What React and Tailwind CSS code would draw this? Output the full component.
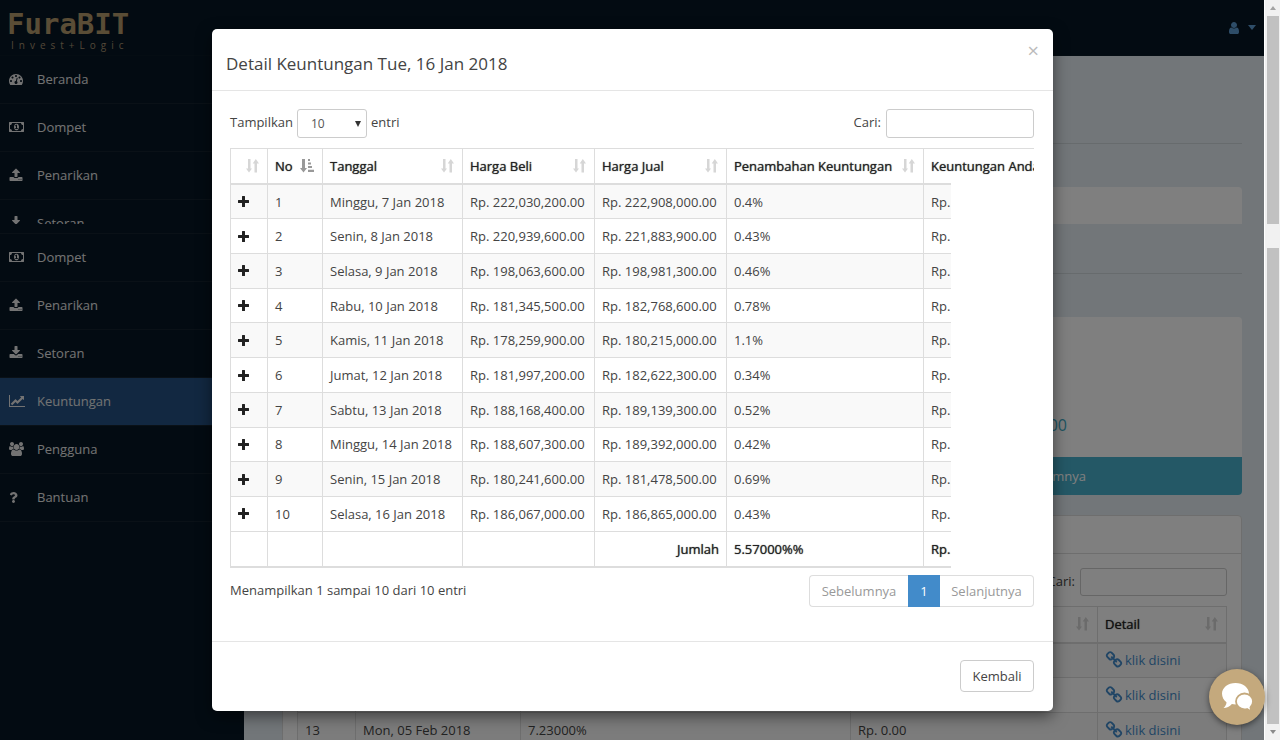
import { FaQuestion } from "react-icons/fa";

const PATHS = {
  dashboard: [1792, "M384 1152q0-53-37.5-90.5t-90.5-37.5-90.5 37.5-37.5 90.5 37.5 90.5 90.5 37.5 90.5-37.5 37.5-90.5zm192-448q0-53-37.5-90.5t-90.5-37.5-90.5 37.5-37.5 90.5 37.5 90.5 90.5 37.5 90.5-37.5 37.5-90.5zm428 481l101-382q6-26-7.5-48.5t-38.5-29.5-48 6.5-30 39.5l-101 382q-60 5-107 43.5t-63 98.5q-20 77 20 146t117 89 146-20 89-117q16-60-6-117t-72-91zm660-33q0-53-37.5-90.5t-90.5-37.5-90.5 37.5-37.5 90.5 37.5 90.5 90.5 37.5 90.5-37.5 37.5-90.5zm-640-640q0-53-37.5-90.5t-90.5-37.5-90.5 37.5-37.5 90.5 37.5 90.5 90.5 37.5 90.5-37.5 37.5-90.5zm448 192q0-53-37.5-90.5t-90.5-37.5-90.5 37.5-37.5 90.5 37.5 90.5 90.5 37.5 90.5-37.5 37.5-90.5zm320 448q0 261-141 483-19 29-54 29h-1402q-35 0-54-29-141-221-141-483 0-182 71-348t191-286 286-191 348-71 348 71 286 191 191 286 71 348z"],
  money: [1920, "M768 1152h384v-96h-128v-448h-114l-148 137 77 80q42-37 55-57h2v288h-128v96zm512-256q0 70-21 142t-59.5 134-101.5 101-138 39-138-39-101.5-101-59.5-134-21-142 21-142 59.5-134 101.5-101 138-39 138 39 101.5 101 59.5 134 21 142zm512 256v-512q-106 0-181-75t-75-181h-1152q0 106-75 181t-181 75v512q106 0 181 75t75 181h1152q0-106 75-181t181-75zm128-832v1152q0 26-19 45t-45 19h-1792q-26 0-45-19t-19-45v-1152q0-26 19-45t45-19h1792q26 0 45 19t19 45z"],
  upload: [1792, "M1344 1472q0-26-19-45t-45-19-45 19-19 45 19 45 45 19 45-19 19-45zm256 0q0-26-19-45t-45-19-45 19-19 45 19 45 45 19 45-19 19-45zm128-224v320q0 40-28 68t-68 28h-1472q-40 0-68-28t-28-68v-320q0-40 28-68t68-28h427q21 56 70.5 92t110.5 36h256q61 0 110.5-36t70.5-92h427q40 0 68 28t28 68zm-325-648q-17 40-59 40h-256v448q0 26-19 45t-45 19h-256q-26 0-45-19t-19-45v-448h-256q-42 0-59-40-17-39 14-69l448-448q18-19 45-19t45 19l448 448q31 30 14 69z"],
  download: [1792, "M1344 1344q0-26-19-45t-45-19-45 19-19 45 19 45 45 19 45-19 19-45zm256 0q0-26-19-45t-45-19-45 19-19 45 19 45 45 19 45-19 19-45zm128-224v320q0 40-28 68t-68 28h-1472q-40 0-68-28t-28-68v-320q0-40 28-68t68-28h465l135 136q58 56 136 56t136-56l136-136h464q40 0 68 28t28 68zm-325-569q17 41-14 70l-448 448q-18 19-45 19t-45-19l-448-448q-31-29-14-70 17-39 59-39h256v-448q0-26 19-45t45-19h256q26 0 45 19t19 45v448h256q42 0 59 39z"],
  chart: [2048, "M2048 1536v128h-2048v-1536h128v1408h1920zm-128-1248v435q0 21-19.5 29.5t-35.5-7.5l-121-121-633 633q-10 10-23 10t-23-10l-233-233-416 416-192-192 585-585q10-10 23-10t23 10l233 233 464-464-121-121q-16-16-7.5-35.5t29.5-19.5h435q14 0 23 9t9 23z"],
  users: [1920, "M593 896q-162 5-265 128h-134q-82 0-138-40.5t-56-118.5q0-353 124-353 6 0 43.5 21t97.5 42.5 119 21.5q67 0 133-23-5 37-5 66 0 139 81 256zm1071 637q0 120-73 189.5t-194 69.5h-874q-121 0-194-69.5t-73-189.5q0-53 3.5-103.5t14-109 26.5-108.5 43-97.5 62-81 85.5-53.5 111.5-20q10 0 43 21.5t73 48 107 48 135 21.5 135-21.5 107-48 73-48 43-21.5q61 0 111.5 20t85.5 53.5 62 81 43 97.5 26.5 108.5 14 109 3.5 103.5zm-1024-1277q0 106-75 181t-181 75-181-75-75-181 75-181 181-75 181 75 75 181zm704 384q0 159-112.5 271.5t-271.5 112.5-271.5-112.5-112.5-271.5 112.5-271.5 271.5-112.5 271.5 112.5 112.5 271.5zm576 225q0 78-56 118.5t-138 40.5h-134q-103-123-265-128 81-117 81-256 0-29-5-66 66 23 133 23 59 0 119-21.5t97.5-42.5 43.5-21q124 0 124 353zm-128-609q0 106-75 181t-181 75-181-75-75-181 75-181 181-75 181 75 75 181z"],
  user: [1792, "M1536 1399q0 109-62.5 187t-150.5 78h-854q-88 0-150.5-78t-62.5-187q0-85 8.5-160.5t31.5-152 58.5-131 94-89 134.5-34.5q131 128 313 128t313-128q76 0 134.5 34.5t94 89 58.5 131 31.5 152 8.5 160.5zm-256-887q0 159-112.5 271.5t-271.5 112.5-271.5-112.5-112.5-271.5 112.5-271.5 271.5-112.5 271.5 112.5 112.5 271.5z"],
  chain: [1792, "M1520 1216q0-40-28-68l-208-208q-28-28-68-28-42 0-72 32 3 3 19 18.5t21.5 21.5 15 19 13 25.5 3.5 27.5q0 40-28 68t-68 28q-15 0-27.5-3.5t-25.5-13-19-15-21.5-21.5-18.5-19q-33 31-33 73 0 40 28 68l206 207q27 27 68 27 40 0 68-26l147-146q28-28 28-67zm-703-705q0-40-28-68l-206-207q-28-28-68-28-39 0-68 27l-147 146q-28 28-28 67 0 40 28 68l208 208q27 27 68 27 42 0 72-31-3-3-19-18.5t-21.5-21.5-15-19-13-25.5-3.5-27.5q0-40 28-68t68-28q15 0 27.5 3.5t25.5 13 19 15 21.5 21.5 18.5 19q33-31 33-73zm895 705q0 120-85 203l-147 146q-83 83-203 83-121 0-204-85l-206-207q-83-83-83-203 0-123 88-209l-88-88q-86 88-208 88-120 0-204-84l-208-208q-84-84-84-204t85-203l147-146q83-83 203-83 121 0 204 85l206 207q83 83 83 203 0 123-88 209l88 88q86-88 208-88 120 0 204 84l208 208q84 84 84 204z"],
};

function Glyph({ name, className = "h-[14px]" }) {
  const [width, d] = PATHS[name];
  return (
    <svg viewBox={`0 0 ${width} 1792`} className={className} fill="currentColor" aria-hidden="true">
      <path d={d} />
    </svg>
  );
}

function SortIcon({ active }) {
  if (active)
    return (
      <svg viewBox="0 0 14 14" className="h-[14px] w-[14px] shrink-0" fill="#999" aria-hidden="true">
        <path d="M2 0h3v9h2L3.500 13.500 0 9h2z" />
        <path d="M8 0h2v2H8zM8 3.500h3v2H8zM8 7h4v2H8zM8 10.700h6v2.300H8z" />
      </svg>
    );
  return (
    <svg viewBox="0 0 13 14" className="h-[14px] w-[13px] shrink-0" fill="#d6d6d6" aria-hidden="true">
      <path d="M2 0h2.500v9.500H6L3 13.500 0 9.500h2z" />
      <path d="M8.500 13.500H11V4.500h2L9.800 0 6.700 4.500h1.800z" />
    </svg>
  );
}

function PlusIcon() {
  return (
    <svg viewBox="0 0 11 11" className="h-[11px] w-[11px]" fill="#222" aria-hidden="true">
      <path d="M4 .500Q4 0 4.500 0h2Q7 0 7 .500V4h3.500Q11 4 11 4.500v2Q11 7 10.500 7H7v3.500Q7 11 6.500 11h-2Q4 11 4 10.500V7H.500Q0 7 0 6.500v-2Q0 4 .500 4H4z" />
    </svg>
  );
}

function ChatIcon() {
  return (
    <svg viewBox="0 0 31 28" className="h-7 w-[31px]" fill="#fff" aria-hidden="true">
      <path d="M13.500 0C21 0 27 4.700 27 10.500S21 21.500 13.500 21.500c-1.300 0-2.500-.1-3.600-.4C7.600 23.600 4.800 25 1.500 25c1.900-1.600 2.900-3.400 3-5.700C1.700 17.300 0 14 0 10.500 0 4.700 6 0 13.500 0z" />
      <path
        stroke="#c4a97d"
        strokeWidth="1.800"
        d="M22.500 10.500c4.700 0 8.500 3.700 8.500 8 0 2.400-1 4.500-2.600 6 .1 1.200.7 2.300 1.800 3.200-2 .1-3.800-.6-5.200-1.700-.8.200-1.600.3-2.500.3-4.700 0-8.500-3.500-8.500-7.800s3.800-8 8.500-8z"
      />
    </svg>
  );
}

function NavItem({ icon, label, active }) {
  return (
    <li>
      <a
        href="#"
        className={
          "flex h-12 items-center border-b border-[#14222f] pb-px pl-[9px] text-[#e6e6e6] " + (active ? "bg-[#255183]" : "")
        }
      >
        <span className="w-7">{icon === "question" ? <FaQuestion className="h-[11px] w-[9px]" /> : <Glyph name={icon} />}</span>
        {label}
      </a>
    </li>
  );
}

const rows = [
  ["Minggu, 7 Jan 2018", "222,030,200.00", "222,908,000.00", "0.4%"],
  ["Senin, 8 Jan 2018", "220,939,600.00", "221,883,900.00", "0.43%"],
  ["Selasa, 9 Jan 2018", "198,063,600.00", "198,981,300.00", "0.46%"],
  ["Rabu, 10 Jan 2018", "181,345,500.00", "182,768,600.00", "0.78%"],
  ["Kamis, 11 Jan 2018", "178,259,900.00", "180,215,000.00", "1.1%"],
  ["Jumat, 12 Jan 2018", "181,997,200.00", "182,622,300.00", "0.34%"],
  ["Sabtu, 13 Jan 2018", "188,168,400.00", "189,139,300.00", "0.52%"],
  ["Minggu, 14 Jan 2018", "188,607,300.00", "189,392,000.00", "0.42%"],
  ["Senin, 15 Jan 2018", "180,241,600.00", "181,478,500.00", "0.69%"],
  ["Selasa, 16 Jan 2018", "186,067,000.00", "186,865,000.00", "0.43%"],
];

const strong = "font-medium text-[#222] [text-shadow:0_0_1px_#444]";
const td = "border-x border-b border-[#ddd] px-[7px] whitespace-nowrap";

function Cols() {
  return (
    <colgroup>
      <col className="w-[37px]" />
      <col className="w-[55px]" />
      <col className="w-[140px]" />
      <col className="w-[132px]" />
      <col className="w-[132px]" />
      <col className="w-[197px]" />
      <col className="w-[180px]" />
    </colgroup>
  );
}

function HeadCell({ label, active }) {
  return (
    <th className={"border-x border-t border-[#ddd] pl-[7px] pr-2 text-left " + strong}>
      <div className="flex items-center justify-between whitespace-nowrap">
        <span>{label}</span>
        <SortIcon active={active} />
      </div>
    </th>
  );
}

function Dialog() {
  return (
    <section
      role="dialog"
      aria-labelledby="dialog-title"
      className="w-[841px] max-w-full rounded-[5px] bg-white shadow-[0_5px_15px_rgba(0,0,0,0.5)]"
    >
      <header className="flex h-[62px] justify-between border-b border-[#e5e5e5] px-[14px]">
        <h4 id="dialog-title" className="pt-[23px] text-[17px] leading-6">Detail Keuntungan Tue, 16 Jan 2018</h4>
        <button type="button" aria-label="Tutup" className="h-11 text-[20px] leading-[44px] text-[#bbb]">×</button>
      </header>

      <div className="h-[550px] pl-[18px] pr-[19px] pt-[18px]">
        <div className="flex items-start justify-between pb-[10px]">
          <label className="flex gap-1 leading-[27px]">
            Tampilkan
            <span className="relative">
              <select className="h-[29px] w-[70px] appearance-none rounded-[3px] border border-[#ccc] bg-white pl-[13px] text-[12px] text-[#555]">
                <option>10</option>
                <option>25</option>
              </select>
              <svg viewBox="0 0 6 6" className="pointer-events-none absolute right-[6px] top-3 h-[6px] w-[6px]" fill="#333" aria-hidden="true">
                <path d="M0 0h6L3 6z" />
              </svg>
            </span>
            entri
          </label>
          <label className="flex gap-[5px] leading-[27px]">
            Cari:
            <input type="search" className="h-[29px] w-[148px] rounded-[3px] border border-[#ccc] px-2" />
          </label>
        </div>

        <div className="overflow-hidden">
          <table className="h-[35px] w-[873px] table-fixed border-collapse">
            <Cols />
            <thead>
              <tr>
                <HeadCell label="" />
                <HeadCell label="No" active />
                <HeadCell label="Tanggal" />
                <HeadCell label="Harga Beli" />
                <HeadCell label="Harga Jual" />
                <HeadCell label="Penambahan Keuntungan" />
                <HeadCell label="Keuntungan Anda" />
              </tr>
            </thead>
          </table>
        </div>
        <div className="w-[721px] max-w-full overflow-hidden border-t-2 border-[#ddd]">
          <table className="h-[383px] w-[873px] table-fixed border-collapse border-b-2 border-[#ddd]">
            <Cols />
            <tbody>
              {rows.map(([date, buy, sell, gain], i) => (
                <tr key={date} className="odd:bg-[#f9f9f9]">
                  <td className={td}>
                    <button type="button" aria-label="Rincian" className="flex"><PlusIcon /></button>
                  </td>
                  <td className={td}>{i + 1}</td>
                  <td className={td}>{date}</td>
                  <td className={td}>Rp. {buy}</td>
                  <td className={td}>Rp. {sell}</td>
                  <td className={td}>{gain}</td>
                  <td className={td}>Rp.</td>
                </tr>
              ))}
              <tr className={strong}>
                <td className={td} />
                <td className={td} />
                <td className={td} />
                <td className={td} />
                <td className={td + " text-right"}>Jumlah</td>
                <td className={td}>5.57000%%</td>
                <td className={td}>Rp.</td>
              </tr>
            </tbody>
          </table>
        </div>

        <div className="flex justify-between pt-[7px]">
          <p className="leading-[30px]">Menampilkan 1 sampai 10 dari 10 entri</p>
          <nav className="flex h-8 text-[#999]">
            <button type="button" className="w-[99px] rounded-l-[4px] border border-r-0 border-[#ddd]">Sebelumnya</button>
            <button type="button" className="w-8 bg-[#428bca] text-white">1</button>
            <button type="button" className="w-[94px] rounded-r-[4px] border border-l-0 border-[#ddd]">Selanjutnya</button>
          </nav>
        </div>
      </div>

      <footer className="flex h-[70px] items-start justify-end border-t border-[#e5e5e5] px-[19px] pt-[18px]">
        <button type="button" className="h-8 w-[74px] rounded-[4px] border border-[#ccc]">Kembali</button>
      </footer>
    </section>
  );
}

const history = [
  ["11", "Wed, 07 Feb 2018", "8.12000%"],
  ["12", "Tue, 06 Feb 2018", "6.54000%"],
  ["13", "Mon, 05 Feb 2018", "7.23000%"],
];

function HistoryTable() {
  return (
    <table className="w-full table-fixed border-collapse">
      <colgroup>
        <col className="w-[58px]" />
        <col className="w-[165px]" />
        <col />
        <col className="w-[247px]" />
        <col className="w-[129px]" />
      </colgroup>
      <thead className="border-b-2 border-[#ddd]">
        <tr className="h-9">
          <HeadCell label="No" active />
          <HeadCell label="Tanggal" />
          <HeadCell label="Persentase" />
          <HeadCell label="Keuntungan" />
          <HeadCell label="Detail" />
        </tr>
      </thead>
      <tbody>
        {history.map(([no, date, gain]) => (
          <tr key={no} className="h-[35px] odd:bg-[#f9f9f9]">
            <td className={td}>{no}</td>
            <td className={td}>{date}</td>
            <td className={td}>{gain}</td>
            <td className={td}>Rp. 0.00</td>
            <td className={td}>
              <a href="#" className="flex items-center gap-[2px] text-[#428bca]">
                <Glyph name="chain" className="h-[18px] w-[18px]" />
                klik disini
              </a>
            </td>
          </tr>
        ))}
      </tbody>
    </table>
  );
}

export default function App() {
  return (
    <div className="flex h-screen overflow-hidden font-['Open_Sans',sans-serif] text-[13px] leading-[18px] text-[#444]">
      <div className="relative flex min-w-0 flex-1 flex-col bg-[#e4edf3]">
        <div className="flex h-[224px] shrink-0 flex-col overflow-hidden">
          <header className="flex h-14 shrink-0 items-center justify-between border-b border-[#0b1a27] bg-[#071624] pl-[7px] pr-2">
            <a href="#" className="text-[#b59a6c]">
              <span className="block pt-2 font-['DejaVu_Sans_Mono',monospace] text-[29px] font-bold leading-[30px]">FuraBIT</span>
              <span className="block pb-1 pl-1 text-[10px] leading-3 tracking-[5px] text-[#a39070]">Invest+Logic</span>
            </a>
            <button type="button" aria-label="Akun" className="flex items-center gap-[7px] text-[#5d9bd1]">
              <Glyph name="user" />
              <svg viewBox="0 0 8 5" className="h-[5px] w-2" fill="currentColor" aria-hidden="true"><path d="M0 0h8L4 5z" /></svg>
            </button>
          </header>
          <div className="flex flex-1">
            <nav className="w-[244px] shrink-0 bg-[#071624]">
              <ul>
                <NavItem icon="dashboard" label="Beranda" />
                <NavItem icon="money" label="Dompet" />
                <NavItem icon="upload" label="Penarikan" />
                <NavItem icon="download" label="Setoran" />
              </ul>
            </nav>
            <main className="flex-1 pl-[38px] pr-[22px] pt-[87px]">
              <hr className="border-[#cfd6db]" />
              <div className="mt-[43px] h-20 rounded-t-[4px] bg-white" />
            </main>
          </div>
        </div>

        <div className="flex min-h-0 flex-1">
          <nav className="w-[244px] shrink-0 bg-[#071624]">
            <ul>
              <li className="h-[10px] border-b border-[#14222f]" />
              <NavItem icon="money" label="Dompet" />
              <NavItem icon="upload" label="Penarikan" />
              <NavItem icon="download" label="Setoran" />
              <NavItem icon="chart" label="Keuntungan" active />
              <NavItem icon="users" label="Pengguna" />
              <NavItem icon="question" label="Bantuan" />
            </ul>
          </nav>
          <main className="min-w-0 flex-1 pl-[38px] pr-[22px] pt-[49px]">
            <hr className="border-[#cfd6db]" />
            <section className="mt-[43px] overflow-hidden rounded-[4px] bg-white">
              <p className="flex h-[140px] items-end justify-end pb-5 pr-[175px] text-[16px] leading-6 text-[#3fa9c4]">Rp. 0.00</p>
              <a href="#" className="flex h-[38px] items-center justify-end bg-[#48b0cc] pr-[156px] text-white">Keuntungan sebelumnya</a>
            </section>
            <section className="mt-5 rounded-[4px] border border-[#ddd] bg-white">
              <div className="h-[38px] border-b border-[#ddd]" />
              <div className="px-[14px] pt-[14px]">
                <label className="flex justify-end gap-[5px] pb-[10px] leading-[26px]">
                  Cari:
                  <input type="search" className="h-7 w-[147px] rounded-[3px] border border-[#ccc] bg-white px-2" />
                </label>
                <HistoryTable />
              </div>
            </section>
          </main>
        </div>

        <div className="absolute inset-0 flex items-start justify-center bg-black/50 pl-px pt-[29px]">
          <Dialog />
        </div>
        <button
          type="button"
          aria-label="Obrolan"
          className="absolute -right-px bottom-[15px] flex h-14 w-14 items-center justify-center rounded-full bg-[#c4a97d] shadow-[0_2px_6px_rgba(0,0,0,0.5)]"
        >
          <ChatIcon />
        </button>
      </div>

      <div aria-hidden="true" className="flex w-4 shrink-0 flex-col items-center border-l border-white bg-[#f1f1f1]">
        <svg viewBox="0 0 16 16" className="h-4 w-4" fill="#a3a3a3"><path d="M5 10h6L8 6z" /></svg>
        <div className="h-[208px] w-3 bg-[#c1c1c1]" />
        <div className="h-6" />
        <div className="w-3 flex-1 bg-[#c1c1c1]" />
        <svg viewBox="0 0 16 16" className="h-4 w-4" fill="#8a8a8a"><path d="M5 6h6l-3 4z" /></svg>
      </div>
    </div>
  );
}
